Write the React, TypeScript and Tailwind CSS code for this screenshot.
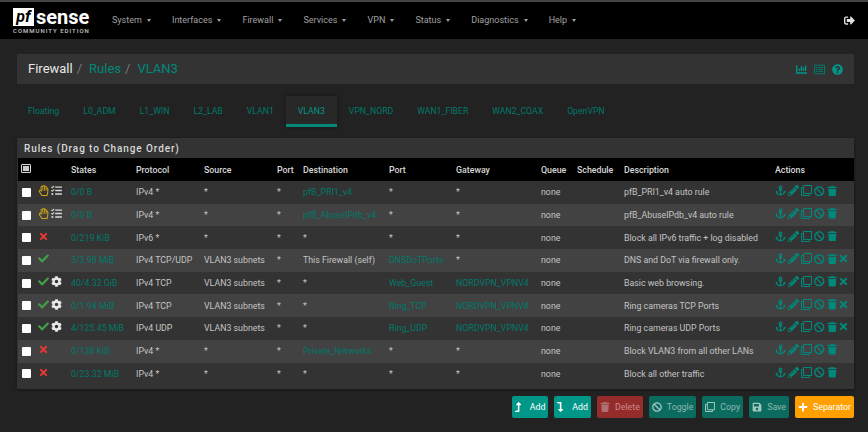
import type { ReactNode } from "react";
import {
  FaAnchor,
  FaBan,
  FaChartBar,
  FaCheck,
  FaCog,
  FaLevelDownAlt,
  FaLevelUpAlt,
  FaPencilAlt,
  FaPlus,
  FaQuestionCircle,
  FaRegClone,
  FaRegHandPaper,
  FaRegListAlt,
  FaSave,
  FaSignOutAlt,
  FaTasks,
  FaTimes,
  FaTrash,
} from "react-icons/fa";

const MENU = ["System", "Interfaces", "Firewall", "Services", "VPN", "Status", "Diagnostics", "Help"];
const TABS = ["Floating", "L0_ADM", "L1_WIN", "L2_LAB", "VLAN1", "VLAN3", "VPN_NORD", "WAN1_FIBER", "WAN2_COAX", "OpenVPN"];
const HEADS = ["", "", "States", "Protocol", "Source", "Port", "Destination", "Port", "Gateway", "Queue", "Schedule", "Description", "Actions"];

type Rule = {
  kind: "block" | "pass" | "route" | "auto";
  states: string;
  proto: string;
  source: string;
  dest: string;
  destLink?: boolean;
  port: string;
  portLink?: boolean;
  gateway: string;
  gatewayLink?: boolean;
  desc: string;
  cross?: boolean;
};

const RULES: Rule[] = [
  { kind: "auto", states: "0/0 B", proto: "IPv4 *", source: "*", dest: "pfB_PRI1_v4", destLink: true, port: "*", gateway: "*", desc: "pfB_PRI1_v4 auto rule" },
  { kind: "auto", states: "0/0 B", proto: "IPv4 *", source: "*", dest: "pfB_AbuseIPdb_v4", destLink: true, port: "*", gateway: "*", desc: "pfB_AbuseIPdb_v4 auto rule" },
  { kind: "block", states: "0/219 KiB", proto: "IPv6 *", source: "*", dest: "*", port: "*", gateway: "*", desc: "Block all IPv6 traffic + log disabled" },
  { kind: "pass", states: "3/3.98 MiB", proto: "IPv4 TCP/UDP", source: "VLAN3 subnets", dest: "This Firewall (self)", port: "DNSDoTPorts", portLink: true, gateway: "*", desc: "DNS and DoT via firewall only.", cross: true },
  { kind: "route", states: "40/4.32 GiB", proto: "IPv4 TCP", source: "VLAN3 subnets", dest: "*", port: "Web_Guest", portLink: true, gateway: "NORDVPN_VPNV4", gatewayLink: true, desc: "Basic web browsing.", cross: true },
  { kind: "route", states: "0/1.94 MiB", proto: "IPv4 TCP", source: "VLAN3 subnets", dest: "*", port: "Ring_TCP", portLink: true, gateway: "NORDVPN_VPNV4", gatewayLink: true, desc: "Ring cameras TCP Ports", cross: true },
  { kind: "route", states: "4/125.45 MiB", proto: "IPv4 UDP", source: "VLAN3 subnets", dest: "*", port: "Ring_UDP", portLink: true, gateway: "NORDVPN_VPNV4", gatewayLink: true, desc: "Ring cameras UDP Ports", cross: true },
  { kind: "block", states: "0/138 KiB", proto: "IPv4 *", source: "*", dest: "Private_Networks", destLink: true, port: "*", gateway: "*", desc: "Block VLAN3 from all other LANs" },
  { kind: "block", states: "0/23.32 MiB", proto: "IPv4 *", source: "*", dest: "*", port: "*", gateway: "*", desc: "Block all other traffic" },
];

function StatusIcons({ kind }: { kind: Rule["kind"] }) {
  if (kind === "auto") {
    return (
      <div className="flex items-center gap-[2px]">
        <FaRegHandPaper className="text-[11px] text-[#d4a514]" />
        <FaTasks className="text-[11px] text-[#d8d8d8]" />
      </div>
    );
  }
  if (kind === "block") return <FaTimes className="text-[11px] text-[#e53935]" />;
  return (
    <div className="flex items-center gap-[2px]">
      <FaCheck className="text-[11px] text-[#43a047]" />
      {kind === "route" && <FaCog className="text-[11px] text-[#e8e8e8]" />}
    </div>
  );
}

function Btn({ icon, label, color }: { icon: ReactNode; label: string; color: string }) {
  return (
    <button className={`flex h-[22px] items-center rounded-[2px] px-[3px] text-[8.8px] ${color}`}>
      {icon}
      {label}
    </button>
  );
}

export default function App() {
  return (
    <div className="h-[432px] w-[868px] overflow-hidden bg-[#222222] font-['Roboto',sans-serif] text-[8.8px] text-[#c4c4c4]">
      <nav className="flex h-[39px] items-center border-t-2 border-[#444444] bg-black">
        <div className="ml-[13px] flex w-[99px] flex-col">
          <div className="flex h-[21px] items-center">
            <span className="flex h-[18px] w-[21px] items-center justify-center bg-white text-[16px] leading-none font-bold text-black italic">pf</span>
            <span className="ml-[2px] text-[20px] leading-none font-bold text-white">sense</span>
          </div>
          <span className="text-[6px] leading-[8px] font-medium tracking-[1px] text-[#c8c8c8]">COMMUNITY EDITION</span>
        </div>
        <div className="flex items-center gap-[21.1px] text-[9px] text-[#a0a0a0]">
          {MENU.map((m) => (
            <span key={m} className="flex items-center gap-[5px]">
              {m}
              <span className="h-0 w-0 border-x-[2.5px] border-t-[3px] border-x-transparent border-t-[#a0a0a0]" />
            </span>
          ))}
        </div>
        <FaSignOutAlt className="mr-[13px] ml-auto text-[11px] text-[#e0e0e0]" />
      </nav>

      <div className="mx-[17px] mt-[15px] flex h-[30px] w-[837px] items-center justify-between bg-[#333333] px-[11px]">
        <div className="flex items-center text-[13px]">
          <span className="text-[#e8e8e8]">Firewall</span>
          <span className="mx-[4px] text-[#777777]">/</span>
          <span className="ml-[3px] text-[#00897b]">Rules</span>
          <span className="mx-[4px] text-[#777777]">/</span>
          <span className="ml-[3px] text-[#00897b]">VLAN3</span>
        </div>
        <div className="flex items-center gap-[7px] text-[11px] text-[#009688]">
          <FaChartBar />
          <FaRegListAlt className="text-[#00796b]" />
          <FaQuestionCircle />
        </div>
      </div>

      <div className="mt-[12px] ml-[16px] flex h-[31px] text-[8.7px] text-[#00796b]">
        {TABS.map((t) => (
          <div
            key={t}
            className={`flex items-center px-[12px] ${t === "VLAN3" ? "border-b-[3px] border-[#00897b] bg-[#282828] pt-[3px] text-[#009688] shadow-[0_0_4px_rgba(0,0,0,0.4)]" : ""}`}
          >
            {t}
          </div>
        ))}
      </div>

      <div className="mx-[17px] mt-[11px] w-[837px] bg-[#333333] pb-[4px] shadow-[0_1px_3px_rgba(0,0,0,0.4)]">
        <div className="flex h-[20px] items-center pl-[7px] text-[10px] font-medium tracking-[0.9px] text-[#d8d8d8]">Rules (Drag to Change Order)</div>
        <table className="ml-px w-[836px] table-fixed border-collapse text-left">
          <colgroup>
            <col className="w-[20px]" />
            <col className="w-[33px]" />
            <col className="w-[65px]" />
            <col className="w-[68px]" />
            <col className="w-[73px]" />
            <col className="w-[26px]" />
            <col className="w-[86px]" />
            <col className="w-[67px]" />
            <col className="w-[85px]" />
            <col className="w-[36px]" />
            <col className="w-[47px]" />
            <col className="w-[151px]" />
            <col className="w-[79px]" />
          </colgroup>
          <thead>
            <tr className="h-[23px] bg-black font-medium text-[#d8d8d8]">
              {HEADS.map((h, i) => (
                <th key={i} className="p-0 pt-[3px] font-medium">
                  {i === 0 ? (
                    <span className="mb-[6px] ml-[3px] block h-[9px] w-[10px] rounded-[1px] border border-[#d8d8d8] bg-[#111111] p-px">
                      <span className="block h-full w-full bg-[#cccccc]" />
                    </span>
                  ) : (
                    h
                  )}
                </th>
              ))}
            </tr>
          </thead>
          <tbody>
            {RULES.map((r, i) => (
              <tr key={i} className={`h-[22.7px] ${i % 2 === 1 ? "bg-[#424242]" : "bg-[#333333]"}`}>
                <td className="p-0">
                  <span className="ml-[4px] block h-[9px] w-[9px] rounded-[1px] bg-white" />
                </td>
                <td className="p-0 pb-[3px] align-middle">
                  <StatusIcons kind={r.kind} />
                </td>
                <td className="p-0 pt-px text-[#00796b]">{r.states}</td>
                <td className="p-0 pt-px">{r.proto}</td>
                <td className="p-0 pt-px">{r.source}</td>
                <td className="p-0 pt-px">*</td>
                <td className={`p-0 pt-px ${r.destLink ? "text-[#00796b]" : ""}`}>{r.dest}</td>
                <td className={`p-0 pt-px ${r.portLink ? "text-[#00796b]" : ""}`}>{r.port}</td>
                <td className={`p-0 pt-px ${r.gatewayLink ? "text-[#00796b]" : ""}`}>{r.gateway}</td>
                <td className="p-0 pt-px">none</td>
                <td className="p-0" />
                <td className="p-0 pt-px whitespace-nowrap">{r.desc}</td>
                <td className="p-0 pb-[3px]">
                  <div className="flex items-center gap-[2px] text-[#00897b]">
                    <FaAnchor className="text-[11px]" />
                    <FaPencilAlt className="text-[11px]" />
                    <FaRegClone className="text-[11px]" />
                    <FaBan className="text-[10.5px]" />
                    <FaTrash className="text-[10.5px]" />
                    {r.cross && <FaTimes className="-ml-[1px] text-[11px]" />}
                  </div>
                </td>
              </tr>
            ))}
          </tbody>
        </table>
      </div>

      <div className="mx-[14px] mt-[7px] flex justify-end gap-[6px] text-white">
        <Btn icon={<FaLevelUpAlt className="mr-[7px] -ml-[2px] text-[10px]" />} label="Add" color="bg-[#009688]" />
        <Btn icon={<FaLevelDownAlt className="mr-[7px] -ml-[2px] text-[10px]" />} label="Add" color="bg-[#009688]" />
        <Btn icon={<FaTrash className="mr-[5px] text-[10px] text-[#b07070]" />} label="Delete" color="bg-[#952c2c] text-[#c88a8a]" />
        <Btn icon={<FaBan className="mr-[5px] text-[10px] text-[#a0c8c0]" />} label="Toggle" color="bg-[#0b6b5f] text-[#8cb8b0]" />
        <Btn icon={<FaRegClone className="mr-[5px] text-[10px] text-[#a0c8c0]" />} label="Copy" color="bg-[#0b6b5f] text-[#8cb8b0]" />
        <Btn icon={<FaSave className="mr-[5px] text-[10px] text-[#a0c8c0]" />} label="Save" color="bg-[#0b6b5f] text-[#8cb8b0]" />
        <Btn icon={<FaPlus className="mr-[5px] text-[10px]" />} label="Separator" color="bg-[#ffa000]" />
      </div>
    </div>
  );
}
